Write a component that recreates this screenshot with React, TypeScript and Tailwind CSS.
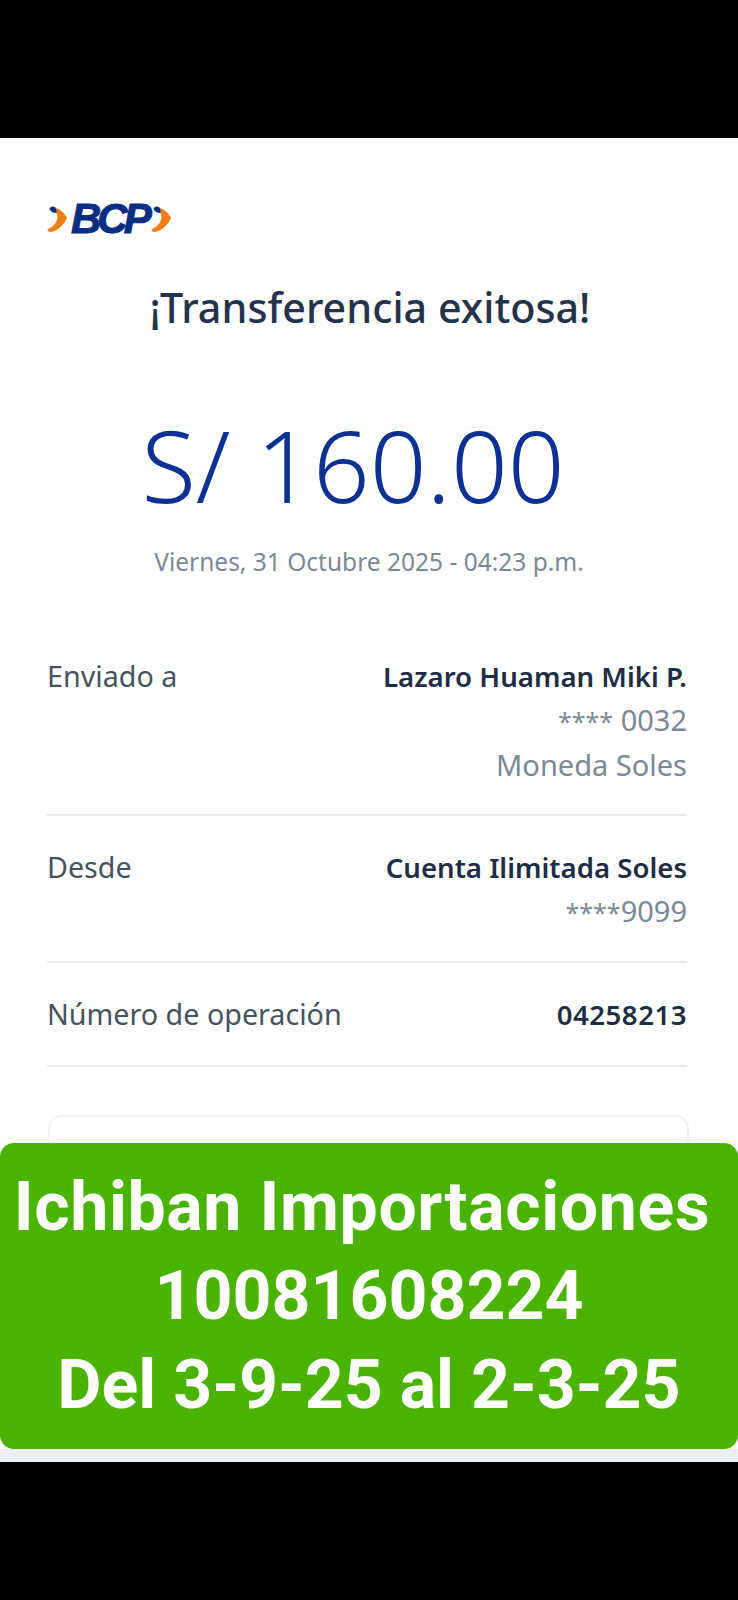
const font = "[font-family:'Noto_Sans',sans-serif]";

function Chevron() {
  return (
    <svg width="21" height="28" viewBox="0 0 26 28" preserveAspectRatio="none" className="shrink-0">
      <path d="M11 3 C18 5 22 9 25 13 C21 20 13 26 5 27 C2 27 0 26 1 24 C7 22 12 18 13 13 C13 10 12 8 11 7 Z" fill="#f57f17" />
      <path d="M3 4 C5 1 8 1 11 3 L12 8 C8 8 5 7 3 4 Z" fill="#0a2d82" />
    </svg>
  );
}

function Masked({ text }: { text: string }) {
  return (
    <p className="text-[29px] leading-[44px] text-[#7c8896]">
      <span className="text-[25px]">****</span>
      {text}
    </p>
  );
}

function Row({
  label,
  title,
  titleClass,
  children,
  className,
}: {
  label: string;
  title: string;
  titleClass?: string;
  children?: React.ReactNode;
  className: string;
}) {
  return (
    <div className={`flex justify-between border-b-2 border-[#e9ebee] ${className}`}>
      <span className="text-[28.700px] leading-[44px] text-[#46535f]">{label}</span>
      <div className="text-right">
        <p className={`text-[27.600px] leading-[44px] font-semibold text-[#1f2d44] ${titleClass ?? ""}`}>{title}</p>
        {children}
      </div>
    </div>
  );
}

export default function App() {
  return (
    <div className={`flex h-[1600px] w-[738px] flex-col overflow-hidden bg-black ${font}`}>
      <div className="h-[138px] shrink-0" />
      <main className="relative h-[1324px] shrink-0 bg-white pr-[51px] pl-[47px]">
        <div className="mt-[57px] flex h-[46px] items-center pt-[2px]">
          <Chevron />
          <span className="ml-[3px] pr-[3px] text-[42px] leading-none font-bold tracking-[-4px] text-[#0a2d82] italic [-webkit-text-stroke:1px_#0a2d82] [font-family:'Liberation_Sans',sans-serif]">
            BCP
          </span>
          <Chevron />
        </div>
        <h1 className="mt-[41px] pl-[6px] text-center text-[41.300px] leading-[50px] font-medium text-[#243349]">
          ¡Transferencia exitosa!
        </h1>
        <p className="mt-[77px] pr-[28px] text-center text-[99.500px] leading-[112px] font-[350] text-[#0d3192]">
          S/ 160.00
        </p>
        <p className="mt-[23px] pl-[4px] text-center text-[24.500px] leading-[36px] text-[#7c8896]">
          Viernes, 31 Octubre 2025 - 04:23 p.m.
        </p>
        <div className="mt-[74px]">
          <Row label="Enviado a" title="Lazaro Huaman Miki P." className="h-[162px]">
            <Masked text=" 0032" />
            <p className="text-[29px] leading-[44px] text-[#7c8896]">Moneda Soles</p>
          </Row>
          <Row label="Desde" title="Cuenta Ilimitada Soles" className="h-[147px] pt-[29px]">
            <Masked text="9099" />
          </Row>
          <Row
            label="Número de operación"
            title="04258213"
            titleClass="tracking-[0.5px]"
            className="h-[104px] pt-[29px]"
          />
        </div>
        <div className="mt-[48px] -mr-[2px] ml-[1px] h-[120px] rounded-t-[14px] border-2 border-[#f2f3f5]" />
        <div className="absolute inset-x-0 top-[1005px] flex h-[306px] flex-col items-center rounded-[14px] bg-[#4ab300] pt-[20px] text-[68px] leading-[89px] font-bold text-white [font-family:Roboto,sans-serif]">
          <p className="mr-[14px] tracking-[0.6px] whitespace-nowrap">Ichiban Importaciones</p>
          <p>10081608224</p>
          <p className="whitespace-nowrap">Del 3-9-25 al 2-3-25</p>
        </div>
        <div className="absolute inset-x-0 bottom-0 h-[13px] bg-[#edf0f5]" />
      </main>
    </div>
  );
}
